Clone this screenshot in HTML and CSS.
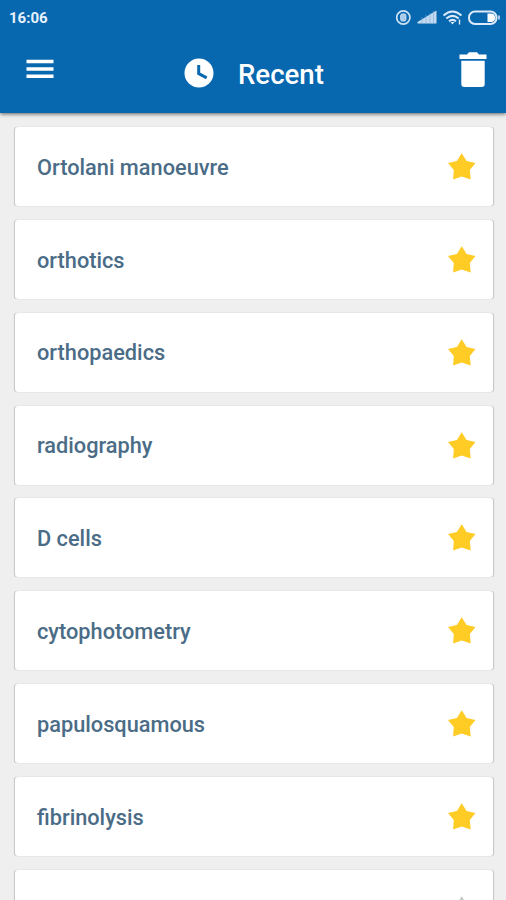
FILE: index.html
```html
<!DOCTYPE html>
<html lang="en">
<head>
<meta charset="utf-8">
<title>Recent</title>
<link rel="stylesheet" href="styles.css">
</head>
<body>
<div class="screen">
  <header class="header">
    <div class="status">
      <span class="time">16:06</span>
      <svg class="status-icons" width="106" height="18" viewBox="0 0 106 18">
        <circle cx="7.300" cy="8.500" r="6.600" fill="none" stroke="#cfe3f7" stroke-width="1.700"/>
        <rect x="4.700" y="5" width="5.200" height="7" rx="1.500" fill="#a9cbea" stroke="#cfe3f7"/>
        <path d="M21.500 14.500V13L40.500 1.500v13z" fill="#c3daf0"/>
        <path d="M26 8v7M30 6v9M34 4v11M37.500 2v13" stroke="#79abd8" stroke-width=".6"/>
        <g fill="none" stroke="#dceafa" stroke-width="2">
          <path d="M47.500 6.500Q56.500 -1.500 65.500 6.500M50.300 9.500Q56.500 4.300 62.700 9.500M53 12.300Q56.500 9.500 60 12.300"/>
        </g>
        <path d="M54.500 13h4l-2 2.500z" fill="#dceafa"/>
        <path d="M63.500 10.500v5" stroke="#dceafa" stroke-width="1.400"/>
        <rect x="73" y="2.500" width="27.500" height="12.500" rx="6" fill="none" stroke="#dceafa" stroke-width="2"/>
        <path d="M91.500 4.500H95a4.200 4.200 0 0 1 0 8.500h-3.500z" fill="#fff"/>
        <path d="M103 6.500v4" stroke="#dceafa" stroke-width="1.500"/>
      </svg>
    </div>
    <div class="toolbar">
      <svg class="menu" width="28" height="20" viewBox="0 0 28 20"><path d="M.5 2.500h27M.5 10h27M.5 17.300h27" stroke="#fff" stroke-width="3.400"/></svg>
      <svg class="clock" width="30" height="30" viewBox="0 0 30 30"><circle cx="15" cy="15" r="14.500" fill="#fff"/><path d="M14.700 7v8.700l8 4.200" fill="none" stroke="#0868af" stroke-width="3"/></svg>
      <h1 class="title">Recent</h1>
      <svg class="trash" width="28" height="36" viewBox="0 0 28 36"><path d="M.5 7V2.500h7.500L10 .3h8l2 2.200h7.500V7zM2.300 8.800h23.400V32a3 3 0 0 1-3 3H5.300a3 3 0 0 1-3-3z" fill="#fff"/></svg>
    </div>
  </header>
  <svg width="0" height="0" class="defs"><symbol id="star" viewBox="0 0 28 27"><path d="M13.700 .3l4.900 7.700 8.900 2-5.700 7.100 .9 9.300-9-3-8.600 3 .7-9.300L0 10l8.900-2z"/></symbol></svg>
  <main class="list">
    <div class="card"><span>Ortolani manoeuvre</span><svg class="star"><use href="#star"/></svg></div>
    <div class="card"><span>orthotics</span><svg class="star"><use href="#star"/></svg></div>
    <div class="card"><span>orthopaedics</span><svg class="star"><use href="#star"/></svg></div>
    <div class="card"><span>radiography</span><svg class="star"><use href="#star"/></svg></div>
    <div class="card"><span>D cells</span><svg class="star"><use href="#star"/></svg></div>
    <div class="card"><span>cytophotometry</span><svg class="star"><use href="#star"/></svg></div>
    <div class="card"><span>papulosquamous</span><svg class="star"><use href="#star"/></svg></div>
    <div class="card"><span>fibrinolysis</span><svg class="star"><use href="#star"/></svg></div>
    <div class="card"><svg class="star off"><use href="#star"/></svg></div>
  </main>
</div>
</body>
</html>
```
FILE: styles.css
```css
* { box-sizing: border-box; }
body { margin: 0; font-family: Roboto, "Liberation Sans", sans-serif; }
.screen { height: 900px; overflow: hidden; background: #efefef; }
.header {
  height: 113px;
  background: #0868af;
  box-shadow: 0 1px 4px rgba(0, 0, 0, .6);
}
.status {
  height: 36px;
  padding: 0 4px 0 9px;
  display: flex;
  align-items: center;
  justify-content: space-between;
}
.time { color: #e6f1fc; font-size: 15px; font-weight: 700; }
.toolbar { display: flex; align-items: flex-start; padding: 0 19px 0 26px; }
.menu { margin-top: 23px; }
.clock { margin: 22px 0 0 130px; }
.title {
  margin: 22px 0 0 24px;
  color: #fff;
  font-size: 27.600px;
  line-height: 34px;
  font-weight: 500;
}
.trash { margin: 16px 0 0 auto; }
.defs { display: block; }
.list {
  padding: 14px 13px 0 15px;
  display: flex;
  flex-direction: column;
  gap: 13.850px;
}
.card {
  height: 79px;
  flex: none;
  padding: 0 17.500px 0 22px;
  display: flex;
  align-items: center;
  background: #fff;
  border-radius: 3px;
  box-shadow: -1px 0 1px -.5px rgba(0, 0, 0, .18), 1px 0 1px -.5px rgba(0, 0, 0, .18);
  color: #4b6c86;
  font-size: 21.750px;
  line-height: 26px;
  font-weight: 500;
}
.card span { padding-top: 2.600px; }
.star { width: 28px; height: 27px; margin-left: auto; fill: #ffcb25; }
.off { fill: #c4c8c8; }
```
